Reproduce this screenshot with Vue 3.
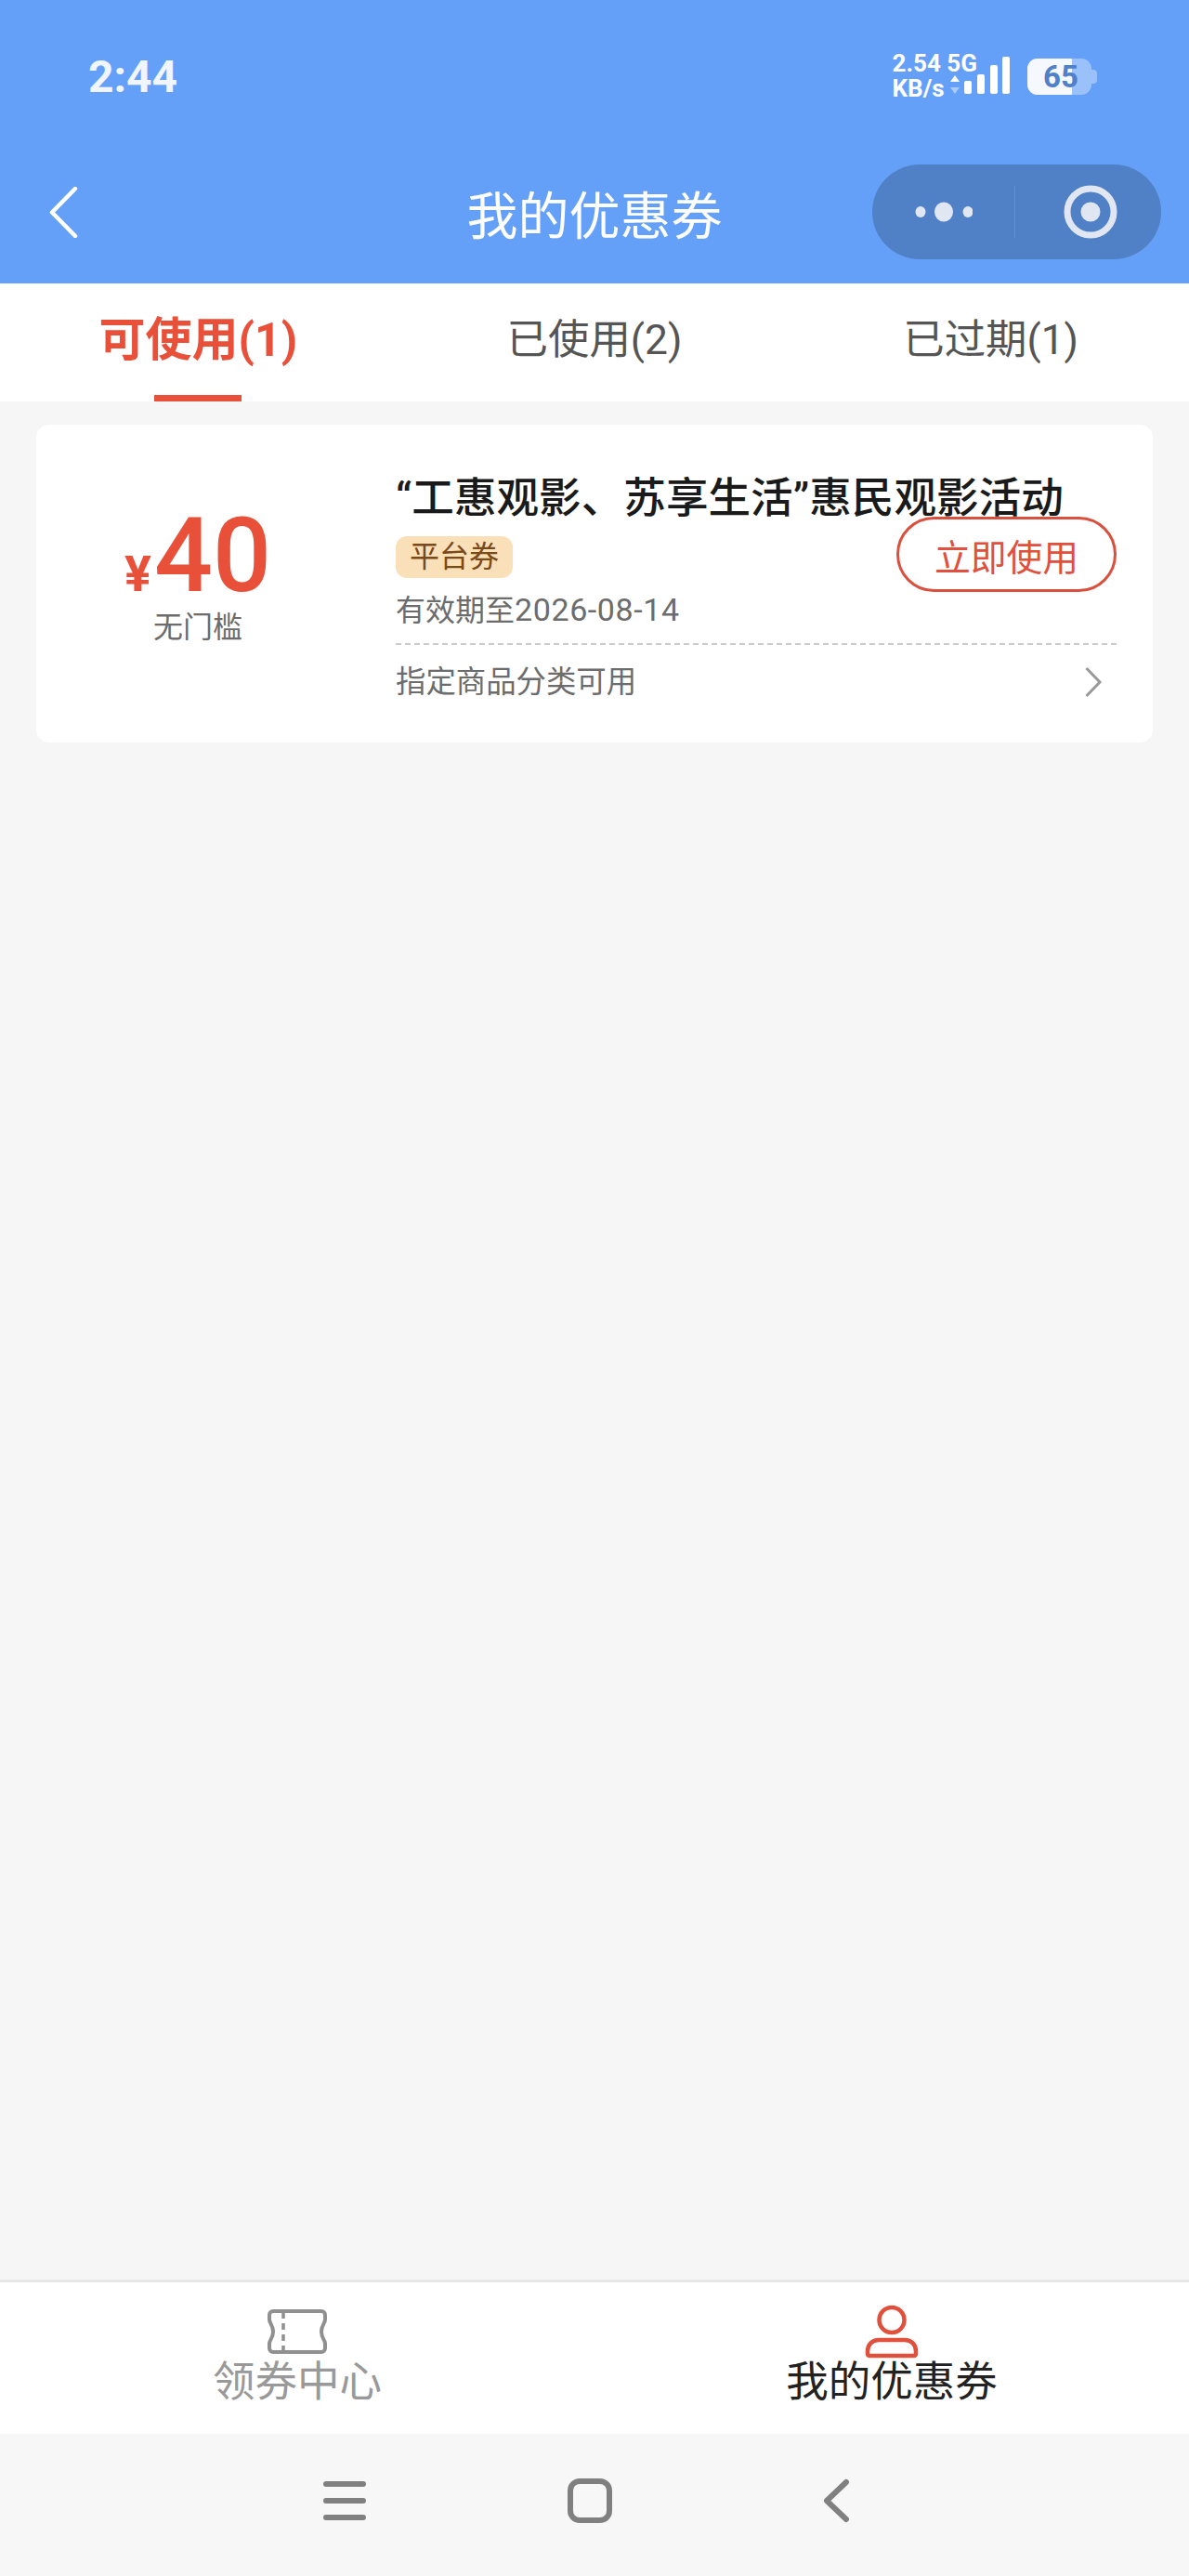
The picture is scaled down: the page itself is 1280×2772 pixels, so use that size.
<template>
  <div class="page">
    <header class="header">
      <div class="status">
        <span class="time">2:44</span>
        <div class="status-right">
          <div class="net">
            <span>2.54 5G</span>
            <span>KB/s</span>
          </div>
          <svg class="signal" width="66" height="44" viewBox="0 0 66 44">
            <path d="M1 27l5-7 5 7z" fill="#fff" />
            <path d="M1 33l5 7 5-7z" fill="#fff" opacity=".45" />
            <rect x="16" y="26" width="8" height="14" rx="2" fill="#fff" />
            <rect x="30" y="19" width="8" height="21" rx="2" fill="#fff" />
            <rect x="44" y="9" width="8" height="31" rx="2" fill="#fff" />
            <rect x="57" y="0" width="8" height="40" rx="2" fill="#fff" />
          </svg>
          <div class="battery">
            <div class="battery-fill"></div>
            <span class="battery-num">65</span>
            <i class="battery-nub"></i>
          </div>
        </div>
      </div>
      <div class="nav">
        <svg class="back" width="31" height="55" viewBox="0 0 31 55">
          <path d="M28 2L3 27.5 28 53" fill="none" stroke="#fff" stroke-width="4.5" stroke-linecap="round" stroke-linejoin="round" />
        </svg>
        <h1 class="title">我的优惠券</h1>
        <div class="capsule">
          <div class="capsule-cell">
            <svg width="62" height="24" viewBox="0 0 62 24">
              <ellipse cx="6" cy="12" rx="5.5" ry="6" fill="#e0e6f2" />
              <ellipse cx="31" cy="12" rx="10" ry="10.5" fill="#e0e6f2" />
              <ellipse cx="57" cy="12" rx="5.5" ry="6" fill="#e0e6f2" />
            </svg>
          </div>
          <i class="capsule-line"></i>
          <div class="capsule-cell ring">
            <svg width="58" height="58" viewBox="0 0 58 58">
              <circle cx="29" cy="29" r="25" fill="none" stroke="#e0e6f2" stroke-width="7" />
              <circle cx="29" cy="29" r="10.5" fill="#e0e6f2" />
            </svg>
          </div>
        </div>
      </div>
    </header>

    <div class="tabs">
      <div
        v-for="tab in tabs"
        :key="tab.label"
        class="tab"
        :class="{ active: tab.active }"
      >
        {{ tab.label }}
      </div>
    </div>

    <main class="list">
      <div class="card">
        <div class="amount">
          <div class="price"><span class="yen">¥</span><span class="num">40</span></div>
          <div class="limit">无门槛</div>
        </div>
        <div class="info">
          <div class="name">“工惠观影、苏享生活”惠民观影活动</div>
          <div class="mid">
            <div>
              <span class="tag">平台券</span>
              <div class="date">有效期至<span class="date-num">2026-08-14</span></div>
            </div>
            <button class="use-btn">立即使用</button>
          </div>
          <div class="scope">
            <span>指定商品分类可用</span>
            <svg width="20" height="34" viewBox="0 0 20 34">
              <path d="M2.5 2L17 17 2.5 32" fill="none" stroke="#999" stroke-width="3" />
            </svg>
          </div>
        </div>
      </div>
    </main>

    <nav class="tabbar">
      <div class="bar-item">
        <svg width="66" height="50" viewBox="0 0 66 50">
          <path d="M7 3h52a4 4 0 0 1 4 4v5c0 4-4 6-4 13s4 9 4 13v5a4 4 0 0 1-4 4H7a4 4 0 0 1-4-4v-5c0-4 4-6 4-13S3 16 3 12V7a4 4 0 0 1 4-4z" fill="none" stroke="#909090" stroke-width="4" />
          <path d="M18 4v42" fill="none" stroke="#909090" stroke-width="3.5" stroke-dasharray="7 5" />
        </svg>
        <span class="bar-text">领券中心</span>
      </div>
      <div class="bar-item on">
        <svg width="60" height="58" viewBox="0 0 60 58">
          <ellipse cx="30" cy="16.5" rx="13.5" ry="13.5" fill="none" stroke="#e0503c" stroke-width="4.5" />
          <path d="M4 53v-3c0-7 5-12 12-12h28c7 0 12 5 12 12v3a2 2 0 0 1-2 2H6a2 2 0 0 1-2-2z" fill="none" stroke="#e0503c" stroke-width="4.5" />
        </svg>
        <span class="bar-text">我的优惠券</span>
      </div>
    </nav>

    <div class="sys-nav">
      <svg class="sys-menu" width="46" height="42" viewBox="0 0 46 42">
        <path d="M3 3h40M3 21h40M3 39h40" stroke="#808080" stroke-width="6" stroke-linecap="round" />
      </svg>
      <svg class="sys-home" width="48" height="48" viewBox="0 0 48 48">
        <rect x="3" y="3" width="42" height="42" rx="10" fill="none" stroke="#808080" stroke-width="6" />
      </svg>
      <svg class="sys-back" width="30" height="48" viewBox="0 0 30 48">
        <path d="M26 4L5 24l21 20" fill="none" stroke="#808080" stroke-width="6" stroke-linecap="round" stroke-linejoin="round" />
      </svg>
    </div>
  </div>
</template>

<script setup>
const tabs = [
  { label: '可使用(1)', active: true },
  { label: '已使用(2)', active: false },
  { label: '已过期(1)', active: false }
]
</script>

<style scoped>
.page {
  display: flex;
  flex-direction: column;
  min-height: 2772px;
  background: #f6f6f6;
  font-family: Roboto, "Noto Sans CJK SC", sans-serif;
}

.header {
  height: 305px;
  background: #65a0f8;
  color: #fff;
}

.status {
  display: flex;
  justify-content: space-between;
  align-items: center;
  height: 164px;
  padding: 0 105px 0 95px;
}

.time {
  font-size: 48px;
  font-weight: 700;
  color: #f0f5fe;
}

.status-right {
  display: flex;
  align-items: center;
}

.net {
  display: flex;
  flex-direction: column;
  font-size: 26px;
  font-weight: 700;
  line-height: 27px;
  white-space: nowrap;
}

.signal {
  margin-left: -30px;
  margin-top: 2px;
}

.battery {
  position: relative;
  width: 69px;
  height: 39px;
  margin-left: 18px;
  margin-top: 1px;
  border-radius: 11px;
  background: rgba(255, 255, 255, 0.35);
}

.battery-fill {
  width: 48px;
  height: 100%;
  border-radius: 11px 0 0 11px;
  background: #f5f8fe;
}

.battery-num {
  position: absolute;
  left: 17px;
  top: 0;
  font-size: 33px;
  font-weight: 700;
  line-height: 39px;
  color: #5080c8;
}

.battery-nub {
  position: absolute;
  right: -6px;
  top: 12px;
  width: 6px;
  height: 15px;
  border-radius: 0 4px 4px 0;
  background: rgba(255, 255, 255, 0.35);
}

.nav {
  display: grid;
  grid-template-columns: 1fr auto 1fr;
  align-items: center;
  height: 128px;
  padding: 0 30px;
}

.back {
  margin-left: 23px;
}

.title {
  margin: 0;
  font-size: 55px;
  font-weight: 400;
}

.capsule {
  display: flex;
  align-items: center;
  justify-self: end;
  width: 311px;
  height: 102px;
  border-radius: 51px;
  background: #5080c6;
}

.capsule-cell {
  display: flex;
  justify-content: center;
  flex: 1;
}

.capsule-cell.ring {
  padding-left: 4px;
}

.capsule-line {
  width: 1px;
  height: 56px;
  background: #5f8fd6;
}

.tabs {
  display: flex;
  height: 127px;
  background: #fff;
}

.tab {
  position: relative;
  flex: 1;
  padding-top: 31px;
  text-align: center;
  font-size: 44.4px;
  line-height: 60px;
  color: #555;
}

.tab.active {
  font-size: 50px;
  font-weight: 700;
  color: #e8503a;
}

.tab.active::after {
  content: "";
  position: absolute;
  left: 50%;
  bottom: 0;
  width: 94px;
  height: 7px;
  margin-left: -47px;
  background: #e8503a;
}

.list {
  flex: 1;
  padding: 25px 39px 0;
}

.card {
  display: flex;
  height: 342px;
  border-radius: 14px;
  background: #fff;
}

.amount {
  width: 348px;
  padding-top: 105px;
  text-align: center;
}

.price {
  display: flex;
  justify-content: center;
  align-items: baseline;
  color: #e8503a;
  line-height: 72px;
}

.yen {
  font-size: 54px;
  font-weight: 700;
  margin-right: 3px;
}

.num {
  font-size: 111px;
  font-weight: 500;
}

.limit {
  margin-top: 4px;
  font-size: 32px;
  line-height: 34px;
  color: #6c6c6c;
}

.info {
  flex: 1;
  padding: 55px 39px 0;
}

.name {
  font-size: 45.6px;
  font-weight: 500;
  line-height: 50px;
  color: #1a1a1a;
  white-space: nowrap;
}

.mid {
  display: flex;
  justify-content: space-between;
  align-items: flex-start;
  margin-top: 15px;
}

.tag {
  display: block;
  width: 126px;
  height: 45px;
  border-radius: 12px;
  background: #fae0b8;
  text-align: center;
  font-size: 32px;
  line-height: 45px;
  color: #7a4a1a;
}

.date {
  margin-top: 14px;
  font-size: 32px;
  line-height: 40px;
  color: #6c6c6c;
}

.date-num {
  font-size: 34px;
  letter-spacing: 0.6px;
}

.use-btn {
  width: 237px;
  height: 81px;
  margin-top: -21px;
  padding: 0;
  border: 3px solid #d9503f;
  border-radius: 41px;
  background: #fff;
  font-family: inherit;
  font-size: 38.8px;
  color: #e0503c;
}

.scope {
  display: flex;
  justify-content: space-between;
  align-items: center;
  margin-top: 15px;
  padding: 21px 15px 0 0;
  border-top: 2px dashed #ccc;
  font-size: 32.4px;
  line-height: 38px;
  color: #6c6c6c;
}

.tabbar {
  display: flex;
  height: 166px;
  border-top: 3px solid #e8e8e8;
  background: #fff;
}

.bar-item {
  display: flex;
  flex-direction: column;
  align-items: center;
  flex: 1;
  padding-top: 28px;
}

.bar-item.on {
  padding-top: 24px;
}

.bar-text {
  margin-top: 2px;
  font-size: 45.5px;
  line-height: 56px;
  color: #999;
}

.on .bar-text {
  margin-top: -2px;
  color: #222;
}

.sys-nav {
  display: flex;
  align-items: center;
  height: 153px;
  padding: 0 0 9px 348px;
  background: #f7f7f7;
}

.sys-home {
  margin-left: 217px;
}

.sys-back {
  margin-left: 226px;
}
</style>

<style>
html,
body {
  margin: 0;
  background: #f6f6f6;
}

* {
  box-sizing: border-box;
}
</style>
